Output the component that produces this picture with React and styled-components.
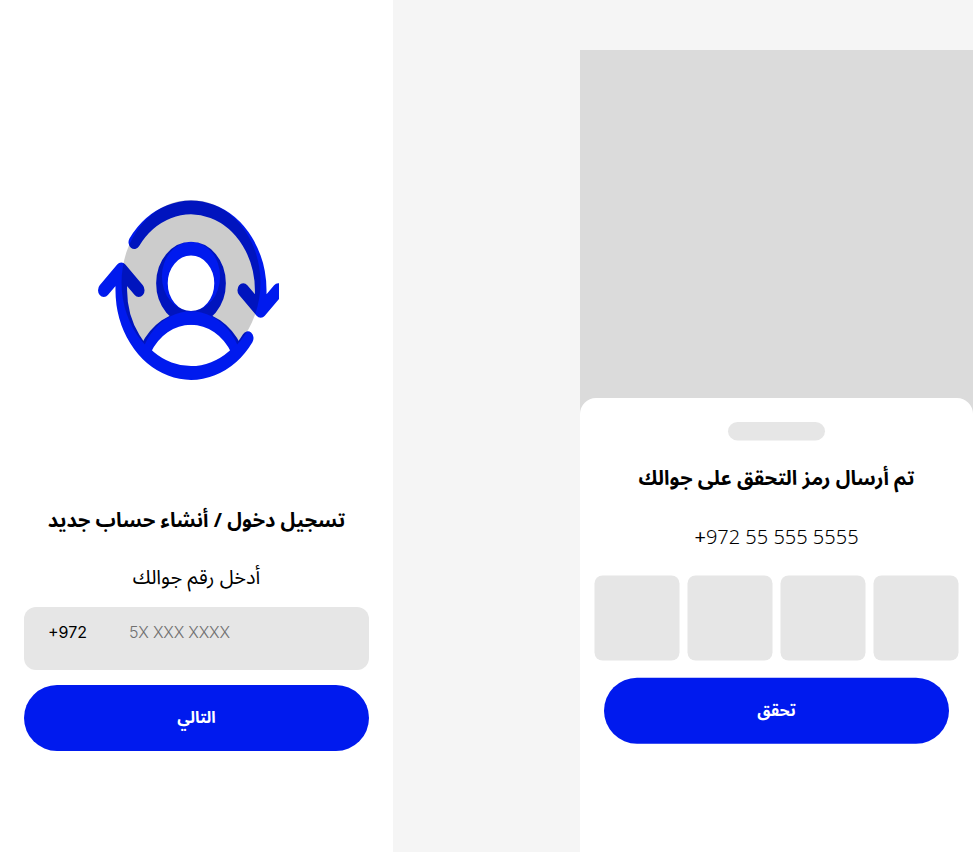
import React from "react";
import styled, { createGlobalStyle } from "styled-components";

const BLUE = "#001aee";
const FIELD = "#e6e6e6";

const GlobalStyle = createGlobalStyle`
  * { box-sizing: border-box; }
  body { margin: 0; background: #f5f5f5; overflow: hidden; }
`;

const Canvas = styled.main`
  display: flex;
  justify-content: space-between;
  width: 973px;
  height: 852px;
  background: #f5f5f5;
  color: #000;
  font-family: "Noto Sans Arabic", "Noto Sans", sans-serif;
`;

const Phone = styled.section`
  display: flex;
  flex-direction: column;
  align-items: center;
  width: 393px;
  height: ${(p) => 852 - p.$top}px;
  margin-top: ${(p) => p.$top}px;
  background: ${(p) => p.$background};
`;

const Logo = styled.svg`
  display: block;
  width: 181px;
  height: 180px;
  margin: 200px 16px 0 0;
  flex: none;
`;

const Title = styled.h1`
  margin: ${(p) => p.$gap}px 0 0;
  height: 32px;
  font-size: 20px;
  font-weight: 700;
  line-height: 32px;
  white-space: nowrap;
`;

const Subtitle = styled.p`
  margin: 25px 0 0;
  height: 32px;
  font-size: 20px;
  font-weight: 400;
  line-height: 32px;
  white-space: nowrap;
`;

const PhoneField = styled.div`
  display: flex;
  width: 345px;
  height: 63px;
  margin-top: 13px;
  padding: 15px 24px 0;
  background: ${FIELD};
  border-radius: 12px;
  font: 400 16px/20px Inter, sans-serif;
`;

const CountryCode = styled.span`
  width: 81px;
`;

const Placeholder = styled.span`
  color: #707070;
  font-weight: 300;
  letter-spacing: -0.22px;
`;

const PrimaryButton = styled.button`
  width: 345px;
  height: 66px;
  flex: none;
  margin-top: ${(p) => p.$gap}px;
  padding: 0;
  border: 0;
  border-radius: 33px;
  background: ${BLUE};
  color: #fff;
  font: 700 16px/24px "Noto Sans Arabic", "Noto Sans", sans-serif;
`;

const Sheet = styled.div`
  display: flex;
  flex-direction: column;
  align-items: center;
  width: 393px;
  height: 454px;
  margin-top: 348px;
  padding-top: 24px;
  background: #fff;
  border-radius: 16px 16px 0 0;
`;

const Handle = styled.div`
  width: 97px;
  height: 19px;
  flex: none;
  border-radius: 10px;
  background: ${FIELD};
  transform: scaleY(0.974);
  transform-origin: top;
`;

const PhoneNumber = styled.p`
  margin: 26px 0 0;
  height: 32px;
  font: 300 20px/32px "Noto Sans", sans-serif;
`;

const PlusSign = styled.span`
  font-weight: 400;
`;

const CodeRow = styled.div`
  display: flex;
  gap: 8px;
  margin-top: 23px;
  transform: translate(-0.5px, -0.5px);
`;

const CodeCell = styled.div`
  width: 85px;
  height: 85px;
  border-radius: 8px;
  background: ${FIELD};
`;

const SheetFooter = styled.div`
  display: flex;
  transform: translateY(-0.33px);
`;

function AccountLogo() {
  return (
    <Logo viewBox="98 200 181 180" aria-hidden="true">
      <defs>
        <mask id="shade" maskUnits="userSpaceOnUse" x="-130" y="-100" width="260" height="200">
          <circle cy="-7.5" r="82.7" fill="#fff" />
          <circle cy="-13.8" r="34.6" fill="#000" />
          <circle cy="83" r="62" fill="#000" />
        </mask>
      </defs>
      <g transform="translate(191 290.2) scale(.84 1)">
        <g fill="none" stroke={BLUE} strokeWidth="13.8" strokeLinecap="round" strokeLinejoin="round">
          <circle cy="-6.9" r="34.6" />
          <path d="M-54 59.2A62 62 0 0 1 54 59.2" strokeLinecap="butt" />
          <path d="M-67.5 -48A83 83 0 0 1 83 0V20.7M62.2 0L83 20.7L103.8 0" />
          <path d="M67.5 48A83 83 0 0 1 -83 0V-20.7M-62.2 0L-83 -20.7L-103.8 0" />
        </g>
        <rect x="-130" y="-100" width="260" height="200" fillOpacity=".2" mask="url(#shade)" />
      </g>
    </Logo>
  );
}

export default function App() {
  return (
    <>
      <GlobalStyle />
      <Canvas>
        <Phone $top={0} $background="#fff">
          <AccountLogo />
          <Title $gap={125} dir="rtl">تسجيل دخول / أنشاء حساب جديد</Title>
          <Subtitle dir="rtl">أدخل رقم جوالك</Subtitle>
          <PhoneField>
            <CountryCode>+972</CountryCode>
            <Placeholder>5X XXX XXXX</Placeholder>
          </PhoneField>
          <PrimaryButton $gap={15} dir="rtl">التالي</PrimaryButton>
        </Phone>
        <Phone $top={50} $background="#dbdbdb">
          <Sheet>
            <Handle />
            <Title $gap={22} dir="rtl">تم أرسال رمز التحقق على جوالك</Title>
            <PhoneNumber><PlusSign>+</PlusSign>972 55 555 5555</PhoneNumber>
            <CodeRow>
              {[0, 1, 2, 3].map((i) => <CodeCell key={i} />)}
            </CodeRow>
            <SheetFooter>
              <PrimaryButton $gap={17} dir="rtl">تحقق</PrimaryButton>
            </SheetFooter>
          </Sheet>
        </Phone>
      </Canvas>
    </>
  );
}
